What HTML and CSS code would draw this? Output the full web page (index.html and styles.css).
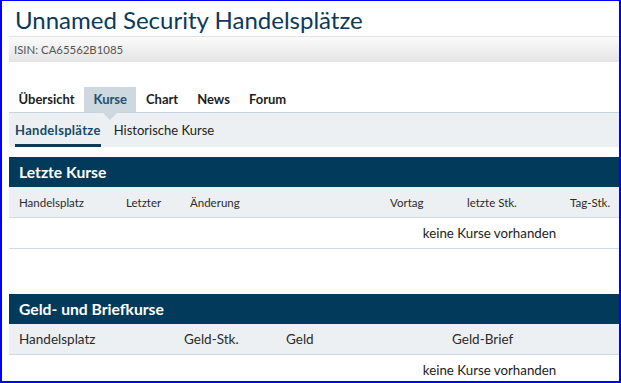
FILE: index.html
```html
<!DOCTYPE html>
<html lang="de">
<head>
<meta charset="utf-8">
<title>Unnamed Security Handelsplätze</title>
<link rel="stylesheet" href="styles.css">
</head>
<body>
<div class="frame">
  <div class="page">
    <h1 class="title">Unnamed Security Handelsplätze</h1>
    <div class="isin">ISIN: CA65562B1085</div>

    <nav class="tabs">
      <a class="tab">Übersicht</a>
      <a class="tab active">Kurse</a>
      <a class="tab">Chart</a>
      <a class="tab">News</a>
      <a class="tab">Forum</a>
    </nav>
    <nav class="subtabs">
      <a class="subtab active">Handelsplätze</a>
      <a class="subtab">Historische Kurse</a>
    </nav>

    <section class="block first">
      <h2 class="block-title">Letzte Kurse</h2>
      <div class="thead small cols-1">
        <span>Handelsplatz</span>
        <span>Letzter</span>
        <span>Änderung</span>
        <span></span>
        <span>Vortag</span>
        <span>letzte Stk.</span>
        <span>Tag-Stk.</span>
      </div>
      <div class="empty">keine Kurse vorhanden</div>
    </section>

    <section class="block second">
      <h2 class="block-title">Geld- und Briefkurse</h2>
      <div class="thead cols-2">
        <span>Handelsplatz</span>
        <span>Geld-Stk.</span>
        <span>Geld</span>
        <span>Geld-Brief</span>
      </div>
      <div class="empty">keine Kurse vorhanden</div>
    </section>
  </div>
</div>
</body>
</html>
```

FILE: styles.css
```css
html, body {
  margin: 0;
  padding: 0;
  background: #ffffff;
}

.frame {
  box-sizing: border-box;
  width: 621px;
  height: 383px;
  border-style: solid;
  border-color: #0000ff;
  border-width: 1px 2px 2px 2px;
  overflow: hidden;
  background: #ffffff;
}

.page {
  width: 961px;
  margin-left: 7px;
  font-family: Lato, "Liberation Sans", sans-serif;
  color: #222222;
}

.title {
  margin: 0;
  padding: 4px 0 0 6px;
  height: 31px;
  font-size: 24px;
  font-weight: 400;
  line-height: 30px;
  color: #0b3a5a;
}

.isin {
  height: 25px;
  border-top: 1px solid #e2e2e2;
  background: linear-gradient(#fbfbfb, #e4e4e4);
  padding-left: 5px;
  font-size: 11.4px;
  line-height: 25px;
  color: #555555;
}

.tabs {
  display: flex;
  margin-top: 25px;
  height: 25px;
}

.tab {
  position: relative;
  padding: 0 9.5px;
  font-size: 13px;
  font-weight: 700;
  line-height: 25px;
  color: #1e1e1e;
}

.tab.active {
  background: #cdd8e0;
  color: #214f70;
}

.tab.active::after {
  content: "";
  position: absolute;
  left: 50%;
  top: 100%;
  margin-left: -8px;
  border-style: solid;
  border-width: 8px 8px 0 8px;
  border-color: #cdd8e0 transparent transparent transparent;
  z-index: 1;
}

.subtabs {
  display: flex;
  gap: 13px;
  height: 34px;
  border-top: 1px solid #c9d5de;
  background: #ecf0f3;
  padding-left: 6px;
}

.subtab {
  box-sizing: border-box;
  height: 34px;
  font-size: 13px;
  line-height: 34px;
  color: #222222;
}

.subtab.active {
  font-weight: 700;
  letter-spacing: 0.3px;
  color: #1a4868;
  border-bottom: 3px solid #0b3a5a;
}

.block-title {
  margin: 0;
  height: 30px;
  background: #023a5c;
  color: #ffffff;
  font-size: 15.7px;
  font-weight: 700;
  line-height: 30px;
  padding-left: 10px;
}

.block.first {
  margin-top: 10px;
}

.block.second {
  margin-top: 45px;
}

.thead {
  display: grid;
  height: 30px;
  align-items: center;
  background: #edf0f3;
  border-bottom: 1px solid #cfd9e1;
  padding-left: 10px;
  font-size: 13.5px;
  color: #2a2a2a;
}

.thead.small {
  font-size: 11.5px;
}

.cols-1 {
  grid-template-columns: 107px 64px 200px 0 77px 103px 1fr;
}

.cols-2 {
  grid-template-columns: 165px 102px 166px 1fr;
}

.empty {
  height: 30px;
  line-height: 30px;
  border-bottom: 1px solid #cfd9e1;
  text-align: center;
  font-size: 13.3px;
  color: #222222;
}
```
